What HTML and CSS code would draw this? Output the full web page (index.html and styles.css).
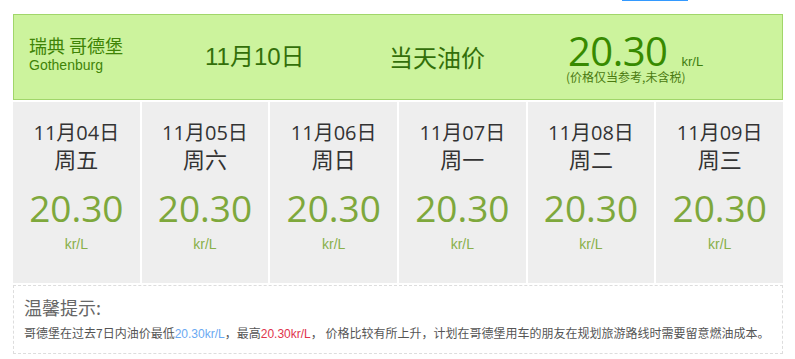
FILE: index.html
```html
<!DOCTYPE html>
<html lang="zh">
<head>
<meta charset="utf-8">
<link rel="stylesheet" href="styles.css">
</head>
<body>
<div class="page">
  <div class="topstrip"><span class="tab-line"></span></div>
  <div class="today">
    <div class="city">
      <div class="city-cn">瑞典 哥德堡</div>
      <div class="city-en">Gothenburg</div>
    </div>
    <div class="today-date">11月10日</div>
    <div class="today-label">当天油价</div>
    <div class="today-price">
      <div class="price-line"><span class="price-big">20.30</span><span class="price-unit">kr/L</span></div>
      <div class="price-note">(价格仅当参考,未含税)</div>
    </div>
  </div>
  <div class="days">
    <div class="day"><div class="d-date">11月04日</div><div class="d-week">周五</div><div class="d-price">20.30</div><div class="d-unit">kr/L</div></div>
    <div class="day"><div class="d-date">11月05日</div><div class="d-week">周六</div><div class="d-price">20.30</div><div class="d-unit">kr/L</div></div>
    <div class="day"><div class="d-date">11月06日</div><div class="d-week">周日</div><div class="d-price">20.30</div><div class="d-unit">kr/L</div></div>
    <div class="day"><div class="d-date">11月07日</div><div class="d-week">周一</div><div class="d-price">20.30</div><div class="d-unit">kr/L</div></div>
    <div class="day"><div class="d-date">11月08日</div><div class="d-week">周二</div><div class="d-price">20.30</div><div class="d-unit">kr/L</div></div>
    <div class="day"><div class="d-date">11月09日</div><div class="d-week">周三</div><div class="d-price">20.30</div><div class="d-unit">kr/L</div></div>
  </div>
  <div class="tips">
    <div class="tips-title">温馨提示:</div>
    <div class="tips-text">哥德堡在过去7日内油价最低<span class="low">20.30kr/L</span>，最高<span class="high">20.30kr/L</span>， 价格比较有所上升，计划在哥德堡用车的朋友在规划旅游路线时需要留意燃油成本。</div>
  </div>
</div>
</body>
</html>
```

FILE: styles.css
```css
html, body {
  margin: 0;
  padding: 0;
  background: #ffffff;
}
body {
  font-family: "Liberation Sans", "Noto Sans CJK SC", sans-serif;
}
.page {
  width: 770px;
  margin-left: 13px;
}
.topstrip {
  height: 14px;
  display: flex;
}
.tab-line {
  display: block;
  width: 66px;
  height: 1px;
  margin-left: 609px;
  background: #3399ff;
}
.today {
  height: 84px;
  background: #ccf39d;
  border: 1px solid #a1d66a;
  display: flex;
  align-items: center;
  color: #3a7d05;
}
.city {
  width: 176px;
  padding-left: 15px;
  margin-top: -8px;
}
.city-cn {
  font-family: "Noto Sans CJK SC", sans-serif;
  font-size: 18px;
  line-height: 24px;
  color: #3f8407;
}
.city-en {
  font-size: 14px;
  line-height: 16px;
  color: #3f8407;
}
.today-date {
  width: 184px;
  font-family: "Liberation Sans", "Noto Sans CJK SC", sans-serif;
  font-size: 24px;
  line-height: 30px;
  color: #336f0a;
}
.today-label {
  width: 179px;
  font-family: "Noto Sans CJK SC", sans-serif;
  font-size: 24px;
  line-height: 30px;
  color: #336f0a;
}
.today-price {
  margin-top: 2px;
}
.price-line {
  display: flex;
  align-items: baseline;
  height: 36px;
}
.price-big {
  font-family: "Open Sans", sans-serif;
  font-size: 40px;
  line-height: 36px;
  color: #378a00;
  letter-spacing: -0.5px;
}
.price-unit {
  font-size: 13px;
  margin-left: 14px;
  color: #3f7d10;
}
.price-note {
  font-family: "Noto Sans CJK SC", sans-serif;
  font-size: 12px;
  line-height: 14px;
  margin-top: 1px;
  color: #4a7a10;
  margin-left: -2px;
}
.days {
  margin-top: 2px;
  display: grid;
  grid-template-columns: repeat(6, 1fr);
  column-gap: 2px;
}
.day {
  height: 181px;
  background: #eeeeee;
  text-align: center;
  padding-top: 19px;
  box-sizing: border-box;
}
.d-date {
  font-family: "Open Sans", "Noto Sans CJK SC", sans-serif;
  font-size: 20px;
  line-height: 24px;
  color: #333333;
}
.d-week {
  font-family: "Noto Sans CJK SC", sans-serif;
  font-size: 22px;
  line-height: 26px;
  color: #333333;
}
.d-price {
  font-family: "Open Sans", sans-serif;
  font-size: 37px;
  line-height: 42px;
  margin-top: 16px;
  color: #7ea83c;
}
.d-unit {
  font-size: 14px;
  line-height: 16px;
  margin-top: 7px;
  color: #89b04a;
}
.tips {
  margin-top: 2px;
  height: 69px;
  box-sizing: border-box;
  border: 1px dashed #dddddd;
  padding: 10px 10px 0 10px;
}
.tips-title {
  font-family: "Noto Sans CJK SC", sans-serif;
  font-size: 18px;
  line-height: 22px;
  color: #666666;
}
.tips-text {
  font-family: "Noto Sans CJK SC", sans-serif;
  font-size: 12px;
  line-height: 18px;
  margin-top: 6px;
  color: #555555;
  white-space: nowrap;
}
.tips-text .low {
  font-family: "Liberation Sans", sans-serif;
  color: #6aa9f2;
}
.tips-text .high {
  font-family: "Liberation Sans", sans-serif;
  color: #e0344c;
}
```
